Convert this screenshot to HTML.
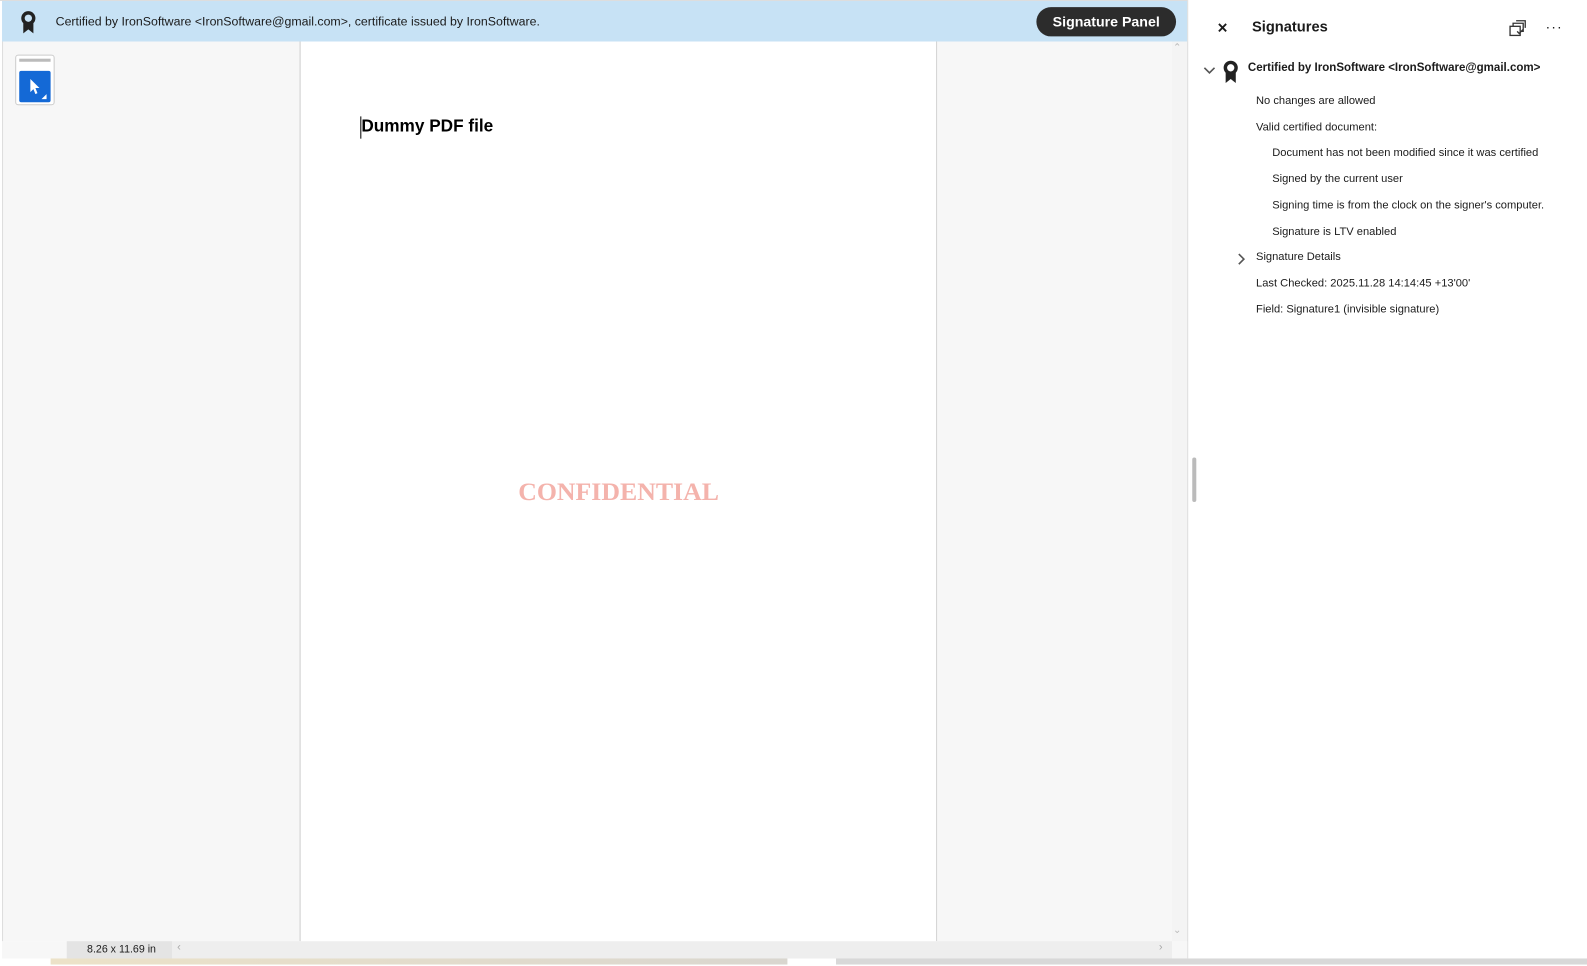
<!DOCTYPE html>
<html><head><meta charset="utf-8"><style>
*{margin:0;padding:0;box-sizing:border-box}
body{width:1587px;height:965px;background:#fff;position:relative;overflow:hidden;font-family:"Liberation Sans",sans-serif}
#w{position:absolute;left:0;top:0;width:1568px;height:954px;transform:scale(1.0121);transform-origin:0 0}
.abs{position:absolute}
.ui{font-family:"Liberation Sans",sans-serif;color:#1b1b1b}
</style></head><body><div id="w">
<div class="abs" style="left:0;top:0;width:1173px;height:1px;background:#ddd"></div>
<div class="abs" style="left:2px;top:1px;width:1171px;height:40px;background:#c7e2f5"></div>
<svg class="abs" style="left:19px;top:10px" width="18" height="24" viewBox="0 0 18 24"><circle cx="9" cy="8" r="7" fill="#222"/><circle cx="9" cy="8" r="3.6" fill="#c7e2f5"/><path d="M4 13 L4 23 L9 19 L14 23 L14 13 Z" fill="#222"/></svg>
<div class="abs ui" style="left:55px;top:14px;font-size:12.2px">Certified by IronSoftware &lt;IronSoftware@gmail.com&gt;, certificate issued by IronSoftware.</div>
<div class="abs" style="left:1024px;top:7px;width:138px;height:29px;border-radius:15px;background:#2c2c2c;color:#fff;font-weight:bold;font-size:14px;line-height:28px;text-align:center">Signature Panel</div>

<div class="abs" style="left:2px;top:41px;width:294px;height:889px;background:#f7f7f7;border-left:1px solid #ddd"></div>
<div class="abs" style="left:15px;top:54px;width:39px;height:50px;border:1px solid #ccc;border-radius:3px;background:#fff"></div>
<div class="abs" style="left:19px;top:58px;width:31px;height:3px;background:#bbb"></div>
<div class="abs" style="left:19px;top:70px;width:31px;height:31px;background:#1469d6;border-radius:2px"></div>
<svg class="abs" style="left:19px;top:70px" width="31" height="31"><path d="M11 8 L11 21 L14 18 L16 23 L18 22 L16 17 L20 17 Z" fill="#fff"/><path d="M27 23 L27 28 L22 28 Z" fill="#fff"/></svg>

<div class="abs" style="left:296px;top:41px;width:630px;height:889px;background:#fff;border-left:1px solid #ccc;border-right:1px solid #ccc"></div>
<div class="abs" style="left:356px;top:115px;width:1px;height:22px;background:#000"></div>
<div class="abs" style="left:357px;top:115px;font-size:17px;font-weight:bold;color:#000">Dummy PDF file</div>
<div class="abs" style="left:512px;top:471px;font-family:'Liberation Serif',serif;font-size:25.5px;font-weight:bold;color:#f4b3ac">CONFIDENTIAL</div>
<div class="abs" style="left:926px;top:41px;width:232px;height:889px;background:#f7f7f7"></div>
<div class="abs" style="left:1158px;top:41px;width:15px;height:889px;background:#f4f4f4"></div>
<div class="abs" style="left:1159px;top:42px;font-size:10px;color:#bbb">⌃</div>
<div class="abs" style="left:1159px;top:914px;font-size:10px;color:#bbb">⌄</div>
<div class="abs" style="left:1173px;top:0;width:1px;height:947px;background:#ddd"></div>
<div class="abs" style="left:2px;top:930px;width:1171px;height:17px;background:#f7f7f7"></div>
<div class="abs" style="left:66px;top:930px;width:1092px;height:17px;background:#eee"></div>
<div class="abs" style="left:66px;top:930px;width:104px;height:17px;background:#e4e4e4"></div>
<div class="abs ui" style="left:86px;top:932px;font-size:10.5px">8.26 x 11.69 in</div>
<div class="abs" style="left:175px;top:930px;font-size:11px;color:#aaa">‹</div>
<div class="abs" style="left:1145px;top:930px;font-size:11px;color:#aaa">›</div>
<div class="abs" style="left:50px;top:947px;width:728px;height:6px;background:linear-gradient(90deg,#ece2c8,#d9d6cf)"></div>
<div class="abs" style="left:826px;top:947px;width:761px;height:6px;background:#d8d8d8"></div>
<div class="abs" style="left:1178px;top:452px;width:4px;height:44px;background:#bbb;border-radius:2px"></div>

<div class="abs ui" style="left:1203px;top:18px;font-size:17px;font-weight:bold">×</div>
<div class="abs ui" style="left:1237px;top:19px;font-size:14.5px;font-weight:bold">Signatures</div>
<svg class="abs" style="left:1490px;top:19px" width="18" height="18" viewBox="0 0 18 18" fill="none" stroke="#333" stroke-width="1.3"><rect x="2" y="7" width="10" height="9"/><path d="M5 7V4h10v8h-3"/><path d="M8 1.5h9v7"/><path d="M9 12l2 2 4-4"/></svg>
<div class="abs ui" style="left:1527px;top:18px;font-size:14px;letter-spacing:1px">···</div>
<svg class="abs" style="left:1189px;top:65px" width="12" height="10"><path d="M1 2 L6 7 L11 2" stroke="#555" stroke-width="1.6" fill="none"/></svg>
<svg class="abs" style="left:1207px;top:59px" width="18" height="24" viewBox="0 0 18 24"><circle cx="9" cy="8" r="7" fill="#222"/><circle cx="9" cy="8" r="3.6" fill="#fff"/><path d="M4 13 L4 23 L9 19 L14 23 L14 13 Z" fill="#222"/></svg>
<div class="abs ui" style="left:1233px;top:61px;font-size:11.4px;font-weight:bold">Certified by IronSoftware &lt;IronSoftware@gmail.com&gt;</div>
<div class="ui" style="position:absolute;left:1241px;top:88px;font-size:11px;line-height:25.7px">
<div>No changes are allowed</div>
<div>Valid certified document:</div>
<div style="padding-left:16px">Document has not been modified since it was certified</div>
<div style="padding-left:16px">Signed by the current user</div>
<div style="padding-left:16px">Signing time is from the clock on the signer's computer.</div>
<div style="padding-left:16px">Signature is LTV enabled</div>
<div>Signature Details</div>
<div>Last Checked: 2025.11.28 14:14:45 +13'00'</div>
<div>Field: Signature1 (invisible signature)</div>
</div>
<svg class="abs" style="left:1222px;top:250px" width="10" height="12"><path d="M2 1 L7 6 L2 11" stroke="#555" stroke-width="1.6" fill="none"/></svg>
</div></body></html>
